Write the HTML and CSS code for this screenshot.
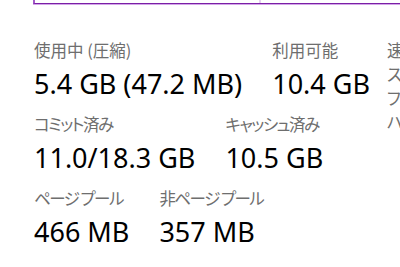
FILE: index.html
```html
<!DOCTYPE html>
<html lang="ja">
<head>
<meta charset="utf-8">
<link rel="stylesheet" href="styles.css">
</head>
<body>
<div class="page">
  <div class="chart">
    <div class="seg seg-used"></div>
    <div class="seg seg-rest"></div>
  </div>
  <div class="content">
    <div class="stats">
      <div class="row">
        <div class="stat"><div class="label">使用中 (圧縮)</div><div class="value">5.4 GB (47.2 MB)</div></div>
        <div class="stat"><div class="label">利用可能</div><div class="value">10.4 GB</div></div>
      </div>
      <div class="row">
        <div class="stat"><div class="label label-kana">コミット済み</div><div class="value">11.0/18.3 GB</div></div>
        <div class="stat"><div class="label label-kana">キャッシュ済み</div><div class="value">10.5 GB</div></div>
      </div>
      <div class="row">
        <div class="stat"><div class="label label-kana">ページ プール</div><div class="value">466 MB</div></div>
        <div class="stat"><div class="label label-kana">非ページ プール</div><div class="value">357 MB</div></div>
      </div>
    </div>
    <div class="side">
      <div class="side-item">速度:</div>
      <div class="side-item">スロットの使用:</div>
      <div class="side-item">フォーム ファクター:</div>
      <div class="side-item">ハードウェア予約済み:</div>
    </div>
  </div>
</div>
</body>
</html>
```
FILE: styles.css
```css
html, body {
  margin: 0;
  padding: 0;
  background: #ffffff;
  overflow: hidden;
}
.page {
  width: 400px;
  height: 267px;
  overflow: hidden;
  font-family: "Noto Sans", "Noto Sans CJK JP", sans-serif;
}
.chart {
  display: flex;
  margin-left: 33px;
  height: 3px;
  border-left: 2px solid #a35bc8;
  border-bottom: 1px solid #7a1fa6;
  box-shadow: 0 1px 0 #d3a6e8;
  width: 420px;
}
.seg-used {
  width: 224px;
  border-right: 2px solid #e6d0f0;
}
.content {
  display: flex;
  padding-left: 34px;
  padding-top: 36px;
}
.stats {
  width: 353px;
  flex: none;
  display: flex;
  flex-direction: column;
  gap: 13px;
}
.row {
  display: flex;
  gap: 30px;
}
.label {
  font-family: "Noto Sans CJK JP", sans-serif;
  font-size: 16.5px;
  font-feature-settings: "palt" 1;
  line-height: 20px;
  margin-bottom: 7px;
  color: #6e6e6e;
  white-space: nowrap;
}
.label-kana {
  letter-spacing: -1.5px;
}
.value {
  font-family: "Noto Sans", sans-serif;
  font-size: 27px;
  line-height: 34px;
  color: #000000;
  white-space: nowrap;
}
.side {
  flex: none;
  display: flex;
  flex-direction: column;
  font-family: "Noto Sans CJK JP", sans-serif;
  font-size: 16.5px;
  font-feature-settings: "palt" 1;
  line-height: 24px;
  color: #6e6e6e;
  white-space: nowrap;
  margin-top: -2px;
}
```
